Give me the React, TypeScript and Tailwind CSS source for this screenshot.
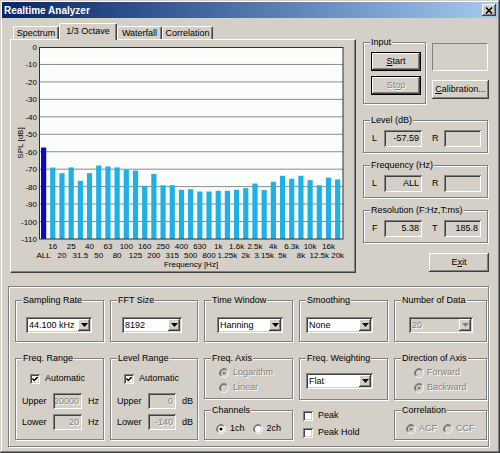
import React from 'react';

// win2k style 3d edges
const raised = 'bg-[#d4d0c8] shadow-[inset_-1px_-1px_#404040,inset_1px_1px_#fff,inset_-2px_-2px_#808080]';
const sunkenWhite = 'bg-white shadow-[inset_1px_1px_#808080,inset_-1px_-1px_#fff,inset_2px_2px_#404040,inset_-2px_-2px_#d4d0c8]';
const sunkenFace = 'bg-[#d4d0c8] shadow-[inset_1px_1px_#808080,inset_-1px_-1px_#fff,inset_2px_2px_#404040,inset_-2px_-2px_#d4d0c8]';
const etched = 'border border-[#808080] shadow-[inset_1px_1px_#fff,1px_1px_#fff]';
const grayText = 'text-[#808080] [text-shadow:1px_1px_0_#fff]';

const bands = ['ALL', '16', '20', '25', '31.5', '40', '50', '63', '80', '100', '125', '160', '200', '250', '315', '400', '500', '630', '800', '1k', '1.25k', '1.6k', '2k', '2.5k', '3.15k', '4k', '5k', '6.3k', '8k', '10k', '12.5k', '16k', '20k'];
const levels = [-57.6, -69.1, -72.3, -69, -76.7, -72.3, -67.9, -68.4, -69, -70.2, -70.8, -79.5, -72.7, -79.2, -79.2, -81.8, -81.5, -82.8, -82.8, -82.4, -82.4, -81.8, -80.9, -78.2, -82, -77.2, -73.8, -75.5, -73.8, -76.3, -79.2, -74.8, -75.9];

function Group({ label, className = '', children }: { label: string; className?: string; children?: React.ReactNode }) {
  return (
    <div className={`${etched} ${className}`}>
      <div className="-mt-[6px] ml-[6px] flex h-[11px]">
        <span className="bg-[#d4d0c8] px-[1px] leading-[11px]">{label}</span>
      </div>
      {children}
    </div>
  );
}

function Btn({ children, className = '', def, disabled }: { children: React.ReactNode; className?: string; def?: boolean; disabled?: boolean }) {
  return (
    <div className={`${raised} ${def ? 'border border-black' : ''} ${disabled ? grayText : ''} flex items-center justify-center leading-[11px] ${className}`}>
      <span>{children}</span>
    </div>
  );
}

function Combo({ value, className = '', disabled }: { value: string; className?: string; disabled?: boolean }) {
  return (
    <div className={`${disabled ? sunkenFace : sunkenWhite} h-[16px] flex items-center p-[2px] ${className}`}>
      <span className={`flex-1 pl-[1px] leading-[11px] ${disabled ? grayText : ''}`}>{value}</span>
      <span className={`${raised} w-[12px] h-[12px] flex items-center justify-center`}>
        <svg width="7" height="4" viewBox="0 0 7 4">
          <polygon points="0,0 7,0 3.5,4" fill={disabled ? '#808080' : '#000'} />
        </svg>
      </span>
    </div>
  );
}

function Field({ value = '', className = '', disabled }: { value?: string; className?: string; disabled?: boolean }) {
  return (
    <div className={`${sunkenFace} flex items-center justify-end pr-[3px] leading-[11px] ${disabled ? grayText : ''} ${className}`}>
      {value}
    </div>
  );
}

function Check({ checked }: { checked?: boolean }) {
  return (
    <span className={`${sunkenWhite} w-[10px] h-[10px] flex items-center justify-center shrink-0`}>
      {checked && (
        <svg width="6" height="6" viewBox="0 0 6 6">
          <path d="M0.4 2.6 L2.3 4.5 L5.6 1" stroke="#000" strokeWidth="1.5" fill="none" />
        </svg>
      )}
    </span>
  );
}

function Radio({ checked, disabled }: { checked?: boolean; disabled?: boolean }) {
  const a = (r: number) => 6 - r * 0.7071;
  const b = (r: number) => 6 + r * 0.7071;
  return (
    <svg width="10" height="10" viewBox="0 0 12 12" className="shrink-0">
      <circle cx="6" cy="6" r="4.5" fill={disabled ? '#d4d0c8' : '#fff'} />
      <path d={`M${a(5.5)} ${b(5.5)} A5.5 5.5 0 0 1 ${b(5.5)} ${a(5.5)}`} stroke="#808080" fill="none" />
      <path d={`M${b(5.5)} ${a(5.5)} A5.5 5.5 0 0 1 ${a(5.5)} ${b(5.5)}`} stroke="#fff" fill="none" />
      <path d={`M${a(4.5)} ${b(4.5)} A4.5 4.5 0 0 1 ${b(4.5)} ${a(4.5)}`} stroke="#404040" fill="none" />
      <path d={`M${b(4.5)} ${a(4.5)} A4.5 4.5 0 0 1 ${a(4.5)} ${b(4.5)}`} stroke="#d4d0c8" fill="none" />
      {checked && <circle cx="6" cy="6" r="1.9" fill={disabled ? '#808080' : '#000'} />}
    </svg>
  );
}

function Chart() {
  const y = (db: number) => 47 + (-db * 192) / 110;
  const bx = (i: number) => 41 + i * 9.19;
  const font = { fontFamily: "'Liberation Sans', Arial, sans-serif", fontSize: 8 };
  return (
    <svg width="344" height="232" viewBox="11 40 344 232" className="block">
      <rect x="39" y="47" width="304" height="192" fill="#fbfdfa" />
      {Array.from({ length: 10 }, (_, k) => (
        <line key={k} x1="39" x2="343" y1={y(-(k + 1) * 10)} y2={y(-(k + 1) * 10)} stroke="#8c8c8c" strokeWidth="1" />
      ))}
      {levels.map((db, i) => (
        <rect key={i} x={bx(i)} y={y(db)} width="5.2" height={239 - y(db)} fill={i === 0 ? '#0a0ac4' : '#1eb0e6'} />
      ))}
      <rect x="39.5" y="47.5" width="303.5" height="191.5" fill="none" stroke="#303030" strokeWidth="1" />
      {Array.from({ length: 12 }, (_, k) => (
        <text key={k} x="37" y={y(-k * 10) + 3} textAnchor="end" style={font}>
          {k === 0 ? '0' : `-${k * 10}`}
        </text>
      ))}
      <text x="23" y="143" textAnchor="middle" transform="rotate(-90 23 143)" style={font}>
        SPL [dB]
      </text>
      {bands.map((b, i) => (
        <text key={b} x={bx(i) + 2.6} y={i % 2 === 1 ? 248.5 : 258} textAnchor="middle" style={font}>
          {b}
        </text>
      ))}
      <text x="191" y="267" textAnchor="middle" style={font}>
        Frequency [Hz]
      </text>
    </svg>
  );
}

export default function App() {
  return (
    <div className="w-[500px] h-[453px] bg-[#d4d0c8] text-black text-[9px] leading-[11px] font-['Liberation_Sans',Arial,sans-serif] shadow-[inset_-1px_-1px_#404040,inset_1px_1px_#d4d0c8,inset_-2px_-2px_#808080,inset_2px_2px_#fff] overflow-hidden flex flex-col">
      {/* title bar */}
      <div className="mt-[2px] mx-[2px] h-[16px] flex items-center justify-between bg-linear-to-r from-[#0a246a] to-[#a6caf0]">
        <span className="pl-[2px] text-white font-bold text-[10px]">Realtime Analyzer</span>
        <span className={`${raised} w-[14px] h-[12px] mr-[2px] flex items-center justify-center`}>
          <svg width="8" height="7" viewBox="0 0 8 7">
            <path d="M1 0.5 L7 6.5 M7 0.5 L1 6.5" stroke="#000" strokeWidth="1.6" />
          </svg>
        </span>
      </div>

      <div className="flex pl-[10px] pt-[5px]">
        {/* tab control */}
        <div className="w-[346px] flex flex-col">
          <div className="flex items-end h-[16px] pl-[3px]">
            <div className="w-[46px] h-[13px] border-t border-l border-white border-r border-r-[#404040] shadow-[inset_-1px_0_#808080] rounded-t-[2px] flex items-center justify-center">
              Spectrum
            </div>
            <div className="relative z-10 -mb-px w-[58px] h-[17px] bg-[#d4d0c8] border-t border-l border-white border-r border-r-[#404040] shadow-[inset_-1px_0_#808080] rounded-t-[2px] flex justify-center pt-[2px]">
              1/3 Octave
            </div>
            <div className="w-[45px] h-[13px] border-t border-l border-white border-r border-r-[#404040] shadow-[inset_-1px_0_#808080] rounded-t-[2px] flex items-center justify-center">
              Waterfall
            </div>
            <div className="w-[51px] h-[13px] border-t border-l border-white border-r border-r-[#404040] shadow-[inset_-1px_0_#808080] rounded-t-[2px] flex items-center justify-center">
              Correlation
            </div>
          </div>
          <div className="w-[346px] h-[234px] border border-white border-r-[#404040] border-b-[#404040] shadow-[inset_-1px_-1px_#808080]">
            <Chart />
          </div>
        </div>

        {/* right panel */}
        <div className="ml-[7px] w-[126px] flex flex-col">
          <div className="flex items-start">
            <Group label="Input" className="mt-[19px] w-[63px] h-[62px]">
              <Btn def className="mt-[4px] ml-[7px] w-[50px] h-[19px]">
                <span className="underline">S</span>tart
              </Btn>
              <Btn def disabled className="mt-[5px] ml-[7px] w-[50px] h-[19px]">
                St<span className="underline">o</span>p
              </Btn>
            </Group>
            <div className="ml-[6px] w-[57px] flex flex-col">
              <div className="mt-[20px] w-[56px] h-[28px] border border-[#808080] border-r-white border-b-white" />
              <Btn className="mt-[9px] w-[57px] h-[19px]">
                <span className="underline">C</span>alibration...
              </Btn>
            </div>
          </div>

          <Group label="Level (dB)" className="mt-[16px] w-[125px] h-[33px]">
            <div className="mt-[4px] flex items-center h-[17px]">
              <span className="ml-[8px] w-[12px]">L</span>
              <Field value="-57.59" className="w-[38px] h-[17px]" />
              <span className="ml-[10px] w-[12px]">R</span>
              <Field className="w-[37px] h-[17px]" />
            </div>
          </Group>

          <Group label="Frequency (Hz)" className="mt-[12px] w-[125px] h-[33px]">
            <div className="mt-[4px] flex items-center h-[17px]">
              <span className="ml-[8px] w-[12px]">L</span>
              <Field value="ALL" className="w-[38px] h-[17px]" />
              <span className="ml-[10px] w-[12px]">R</span>
              <Field className="w-[37px] h-[17px]" />
            </div>
          </Group>

          <Group label="Resolution (F:Hz,T:ms)" className="mt-[12px] w-[125px] h-[33px]">
            <div className="mt-[4px] flex items-center h-[17px]">
              <span className="ml-[8px] w-[12px]">F</span>
              <Field value="5.38" className="w-[38px] h-[17px]" />
              <span className="ml-[10px] w-[12px]">T</span>
              <Field value="185.8" className="w-[37px] h-[17px]" />
            </div>
          </Group>

          <Btn className="mt-[10px] ml-[66px] w-[60px] h-[19px]">
            E<span className="underline">x</span>it
          </Btn>
        </div>
      </div>

      {/* settings frame */}
      <div className={`mt-[13px] ml-[8px] w-[481px] h-[161px] ${etched} flex pl-[6px] gap-[6px]`}>
        <div className="w-[89px] flex flex-col">
          <Group label="Sampling Rate" className="mt-[13px] h-[42px]">
            <Combo value="44.100 kHz" className="mt-[11px] ml-[10px] w-[66px]" />
          </Group>
          <Group label="Freq. Range" className="mt-[16px] h-[82px]">
            <div className="mt-[9px] ml-[14px] flex items-center gap-[5px] h-[11px]">
              <Check checked />
              <span>Automatic</span>
            </div>
            <div className="mt-[9px] flex items-center h-[16px]">
              <span className="ml-[6px] w-[31px]">Upper</span>
              <Field value="20000" disabled className="w-[29px] h-[16px]" />
              <span className="ml-[6px]">Hz</span>
            </div>
            <div className="mt-[5px] flex items-center h-[16px]">
              <span className="ml-[6px] w-[31px]">Lower</span>
              <Field value="20" disabled className="w-[29px] h-[16px]" />
              <span className="ml-[6px]">Hz</span>
            </div>
          </Group>
        </div>

        <div className="w-[88px] flex flex-col">
          <Group label="FFT Size" className="mt-[13px] h-[42px]">
            <Combo value="8192" className="mt-[11px] ml-[11px] w-[60px]" />
          </Group>
          <Group label="Level Range" className="mt-[16px] h-[82px]">
            <div className="mt-[9px] ml-[13px] flex items-center gap-[5px] h-[11px]">
              <Check checked />
              <span>Automatic</span>
            </div>
            <div className="mt-[9px] flex items-center h-[16px]">
              <span className="ml-[6px] w-[31px]">Upper</span>
              <Field value="0" disabled className="w-[28px] h-[16px]" />
              <span className="ml-[6px]">dB</span>
            </div>
            <div className="mt-[5px] flex items-center h-[16px]">
              <span className="ml-[6px] w-[31px]">Lower</span>
              <Field value="-140" disabled className="w-[28px] h-[16px]" />
              <span className="ml-[6px]">dB</span>
            </div>
          </Group>
        </div>

        <div className="w-[89px] flex flex-col">
          <Group label="Time Window" className="mt-[13px] h-[42px]">
            <Combo value="Hanning" className="mt-[11px] ml-[12px] w-[66px]" />
          </Group>
          <Group label="Freq. Axis" className="mt-[16px] h-[41px]">
            <div className="mt-[3px] ml-[14px] flex items-center gap-[4px] h-[11px]">
              <Radio checked disabled />
              <span className={grayText}>Logarithm</span>
            </div>
            <div className="mt-[4px] ml-[14px] flex items-center gap-[4px] h-[11px]">
              <Radio disabled />
              <span className={grayText}>Linear</span>
            </div>
          </Group>
          <Group label="Channels" className="mt-[11px] h-[30px]">
            <div className="mt-[7px] ml-[11px] flex items-center h-[11px]">
              <Radio checked />
              <span className="ml-[4px]">1ch</span>
              <span className="ml-[8px]">
                <Radio />
              </span>
              <span className="ml-[4px]">2ch</span>
            </div>
          </Group>
        </div>

        <div className="w-[89px] flex flex-col">
          <Group label="Smoothing" className="mt-[13px] h-[42px]">
            <Combo value="None" className="mt-[11px] ml-[6px] w-[67px]" />
          </Group>
          <Group label="Freq. Weighting" className="mt-[16px] h-[42px]">
            <Combo value="Flat" className="mt-[9px] ml-[6px] w-[67px]" />
          </Group>
          <div className="mt-[10px] ml-[4px] flex items-center gap-[5px] h-[11px]">
            <Check />
            <span>Peak</span>
          </div>
          <div className="mt-[6px] ml-[4px] flex items-center gap-[5px] h-[11px]">
            <Check />
            <span>Peak Hold</span>
          </div>
        </div>

        <div className="w-[93px] flex flex-col">
          <Group label="Number of Data" className="mt-[13px] h-[42px]">
            <Combo value="20" disabled className="mt-[11px] ml-[14px] w-[64px]" />
          </Group>
          <Group label="Direction of Axis" className="mt-[16px] h-[42px]">
            <div className="mt-[3px] ml-[19px] flex items-center gap-[3px] h-[11px]">
              <Radio disabled />
              <span className={grayText}>Forward</span>
            </div>
            <div className="mt-[4px] ml-[19px] flex items-center gap-[3px] h-[11px]">
              <Radio checked disabled />
              <span className={grayText}>Backward</span>
            </div>
          </Group>
          <Group label="Correlation" className="mt-[10px] h-[30px]">
            <div className="mt-[7px] ml-[11px] flex items-center h-[11px]">
              <Radio checked disabled />
              <span className={`ml-[3px] ${grayText}`}>ACF</span>
              <span className="ml-[6px]">
                <Radio disabled />
              </span>
              <span className={`ml-[3px] ${grayText}`}>CCF</span>
            </div>
          </Group>
        </div>
      </div>
    </div>
  );
}
